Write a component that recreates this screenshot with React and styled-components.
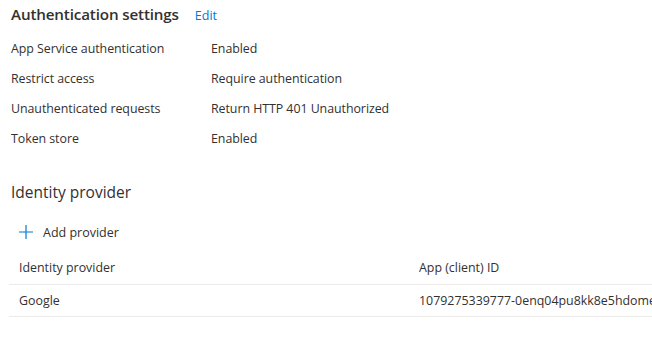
import { Fragment } from 'react'
import styled, { createGlobalStyle } from 'styled-components'

const Global = createGlobalStyle`
  body {
    margin: 0;
    background: #fff;
    font-family: "Segoe UI", "Open Sans", "Liberation Sans", sans-serif;
    color: #323130;
  }
`

const Page = styled.div`
  width: 652px;
  height: 338px;
  overflow: hidden;
  padding: 4px 0 0 11px;
  box-sizing: border-box;
`

const TitleRow = styled.div`
  display: flex;
  align-items: baseline;
  gap: 16px;
  height: 24px;
`

const Title = styled.h2`
  margin: 0;
  font-size: 15.2px;
  font-weight: 600;
  letter-spacing: -0.15px;
`

const EditLink = styled.a`
  color: #0078d4;
  font-size: 12.5px;
  text-decoration: none;
`

const Props = styled.div`
  display: grid;
  grid-template-columns: 200px 1fr;
  grid-auto-rows: 30px;
  margin-top: 5px;
  font-size: 12.4px;
  letter-spacing: -0.05px;
  align-items: center;
`

const Section = styled.h2`
  margin: 27px 0 0;
  font-size: 15.5px;
  font-weight: 400;
  height: 24px;
  line-height: 24px;
`

const AddButton = styled.button`
  display: flex;
  align-items: center;
  gap: 9px;
  background: none;
  border: 0;
  padding: 0 0 0 7px;
  margin-top: 16px;
  height: 24px;
  font: inherit;
  font-size: 12.5px;
  color: #323130;
`

const Table = styled.div`
  margin-top: 6px;
  margin-left: -2px;
  font-size: 12.4px;
`

const Row = styled.div`
  display: grid;
  grid-template-columns: 400px 1fr;
  height: ${p => (p.$head ? 34 : 31)}px;
  align-items: center;
  padding-left: 10px;
  border-bottom: 1px solid #edebe9;
  white-space: nowrap;
  overflow: hidden;
`

const Cell = styled.span`
  overflow: hidden;
`

const settings = [
  ['App Service authentication', 'Enabled'],
  ['Restrict access', 'Require authentication'],
  ['Unauthenticated requests', 'Return HTTP 401 Unauthorized'],
  ['Token store', 'Enabled'],
]

export default function App() {
  return (
    <Page>
      <Global />
      <TitleRow>
        <Title>Authentication settings</Title>
        <EditLink href="#">Edit</EditLink>
      </TitleRow>
      <Props>
        {settings.map(([k, v]) => (
          <Fragment key={k}>
            <span>{k}</span>
            <span>{v}</span>
          </Fragment>
        ))}
      </Props>
      <Section>Identity provider</Section>
      <AddButton>
        <svg width="16" height="16" viewBox="0 0 16 16">
          <path d="M8 1v14M1 8h14" stroke="#0078d4" strokeWidth="1.2" fill="none" />
        </svg>
        Add provider
      </AddButton>
      <Table>
        <Row $head>
          <Cell>Identity provider</Cell>
          <Cell>App (client) ID</Cell>
        </Row>
        <Row>
          <Cell>Google</Cell>
          <Cell>1079275339777-0enq04pu8kk8e5hdome</Cell>
        </Row>
      </Table>
    </Page>
  )
}
